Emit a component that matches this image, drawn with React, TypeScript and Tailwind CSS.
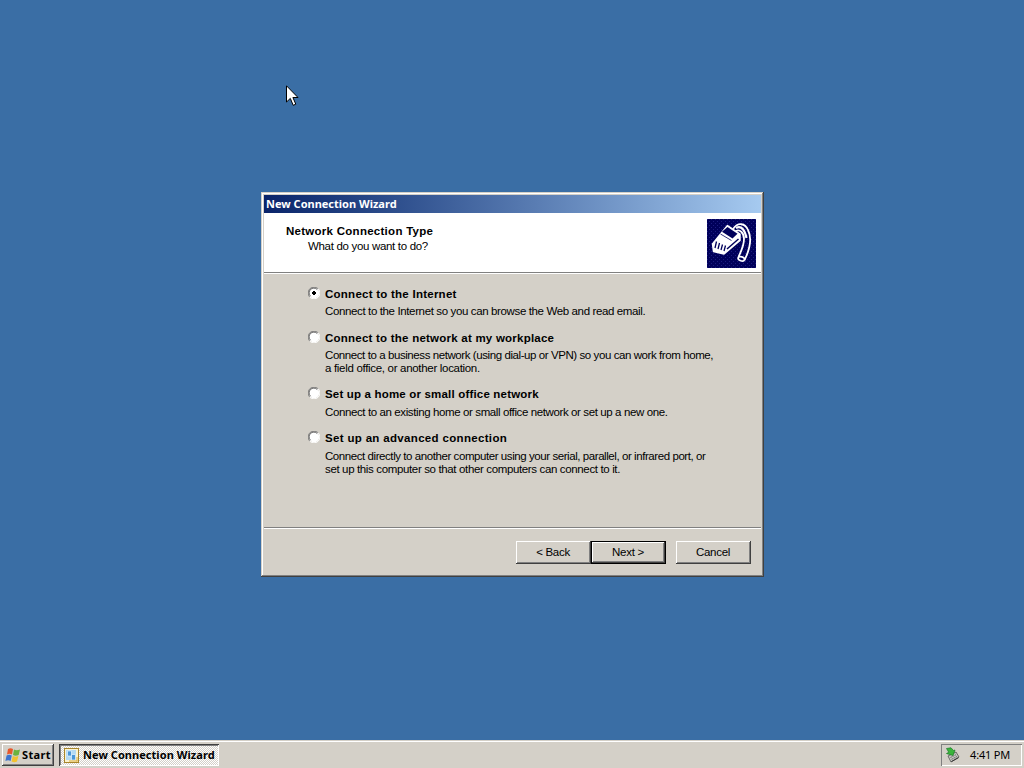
import { useState } from "react";
import clsx from "clsx";

const SANS = "font-['Liberation_Sans',Arial,sans-serif]";
const UI = "font-['Noto_Sans','Open_Sans',sans-serif]";

// Two pixel bevels: outer edge first, inner edge second
const RAISED = "shadow-[inset_-1px_-1px_#404040,inset_1px_1px_#ffffff,inset_-2px_-2px_#808080]";
const WINDOW_FRAME =
  "shadow-[inset_-1px_-1px_#404040,inset_1px_1px_#d4d0c8,inset_-2px_-2px_#808080,inset_2px_2px_#ffffff]";

interface Line {
  text: string;
  tracking: string;
}

interface Option {
  id: string;
  title: Line;
  lines: Line[];
  className: string;
}

const options: Option[] = [
  {
    id: "internet",
    title: { text: "Connect to the Internet", tracking: "tracking-[0.25px]" },
    lines: [{ text: "Connect to the Internet so you can browse the Web and read email.", tracking: "tracking-[-0.37px]" }],
    className: "gap-[4px] h-[44px]",
  },
  {
    id: "workplace",
    title: { text: "Connect to the network at my workplace", tracking: "tracking-[0.23px]" },
    lines: [
      { text: "Connect to a business network (using dial-up or VPN) so you can work from home,", tracking: "tracking-[-0.42px]" },
      { text: "a field office, or another location.", tracking: "tracking-[-0.31px]" },
    ],
    className: "gap-[4px] h-[56px]",
  },
  {
    id: "home",
    title: { text: "Set up a home or small office network", tracking: "tracking-[0.18px]" },
    lines: [{ text: "Connect to an existing home or small office network or set up a new one.", tracking: "tracking-[-0.39px]" }],
    className: "gap-[5px] h-[44px]",
  },
  {
    id: "advanced",
    title: { text: "Set up an advanced connection", tracking: "tracking-[0.33px]" },
    lines: [
      { text: "Connect directly to another computer using your serial, parallel, or infrared port, or", tracking: "tracking-[-0.43px]" },
      { text: "set up this computer so that other computers can connect to it.", tracking: "tracking-[-0.36px]" },
    ],
    className: "gap-[5px]",
  },
];

function Radio({ checked }: { checked: boolean }) {
  return (
    <svg width="12" height="12" viewBox="0 0 12 12" className="shrink-0">
      <circle cx="6" cy="6" r="5.2" fill="#fff" />
      <path d="M1.8 10.2A5.5 5.5 0 0 1 10.2 1.8" fill="none" stroke="#808080" />
      <path d="M2.5 9.2A4.6 4.6 0 0 1 9.2 2.5" fill="none" stroke="#404040" strokeWidth=".8" />
      <path d="M10.2 1.8A5.5 5.5 0 0 1 1.8 10.2" fill="none" stroke="#fff" />
      {checked && <path d="M5 4h2v1h1v2H7v1H5V7H4V5h1z" fill="#000" />}
    </svg>
  );
}

function PlugIcon() {
  return (
    <svg width="49" height="49" viewBox="0 0 49 49" className="bg-[#00005a]">
      <defs>
        <pattern id="dots" width="4" height="4" patternUnits="userSpaceOnUse">
          <rect width="1" height="1" fill="#1c1c80" />
          <rect x="2" y="2" width="1" height="1" fill="#1c1c80" />
        </pattern>
      </defs>
      <rect width="49" height="49" fill="url(#dots)" />
      {/* cable */}
      <path d="M26 10C31 3 38 4 41 11C45 19 43 30 37.5 41" fill="none" stroke="#fff" strokeWidth="1.8" />
      <path d="M29 12C33 10 37 14 37 20C37 27 34 32 31.5 38" fill="none" stroke="#fff" strokeWidth="1.8" />
      <path d="M29 9C35 6 38 12 39.5 19" fill="none" stroke="#fff" strokeWidth="2.2" />
      <ellipse cx="34.3" cy="39.8" rx="3.3" ry="2" transform="rotate(18 34.3 39.8)" fill="#00005a" stroke="#fff" strokeWidth="1.7" />
      {/* connector */}
      <path d="M20.5 6.5L33 15V21.5L17 35L6.500 32.5L5.500 25Z" fill="#fff" stroke="#fff" strokeWidth="1.5" strokeLinejoin="round" />
      <path d="M20.5 8L30.5 14.800L25.500 19.500L15 12.800Z" fill="#00005a" />
      <path d="M13.500 15L24.500 21.5" stroke="#00005a" strokeWidth=".8" />
      <path d="M9.500 22.500L8 29M12.500 24L11 30M15.500 25.500L14 31M18.500 26.500L17 32" stroke="#00005a" strokeWidth="1.3" />
      <path d="M20 30L31.5 20" stroke="#00005a" strokeWidth="1.500" />
    </svg>
  );
}

function StartFlag() {
  return (
    <svg width="16" height="16" viewBox="0 0 16 16" className="shrink-0">
      <path d="M3 2Q5.5 .5 8 2L7 7.5Q4.5 6 2 7.5Z" fill="#e8582c" />
      <path d="M9 2.5Q11.5 4 15 2.5L13.7 8Q10.5 9.5 8 8Z" fill="#6cb33e" />
      <path d="M1.6 8.5Q4.3 7 6.8 8.5L5.6 14Q3.3 12.5 .4 14Z" fill="#3d75cf" />
      <path d="M7.8 9Q10.3 10.5 13.4 9L12 14.5Q9.3 16 6.6 14.5Z" fill="#f3c22e" />
    </svg>
  );
}

function WizardIcon() {
  return (
    <svg width="16" height="16" viewBox="0 0 16 16" className="shrink-0">
      <rect x=".5" y=".5" width="14" height="14" fill="#fbf3cf" stroke="#a8852c" />
      <rect x="2" y="2" width="10" height="10" fill="#b4daf3" />
      <path d="M3.500 3h4v5h-4z" fill="#4b97d8" stroke="#e8f5ff" strokeWidth=".7" />
      <path d="M7.500 6.5h4v5.500h-4z" fill="#4b97d8" stroke="#e8f5ff" strokeWidth=".7" />
      <path d="M5 13h8.500M13 9v4.500" stroke="#dcae3c" />
    </svg>
  );
}

function TrayIcon() {
  return (
    <svg width="16" height="16" viewBox="0 0 16 16" className="-ml-px">
      <path d="M4 9L12 5L15 10L7 15Z" fill="#c4c4c0" stroke="#50504c" strokeWidth=".8" />
      <path d="M6.5 10.5L12 7.7M7.5 12.3L13 9.5" stroke="#666" strokeDasharray="1.5 .8" />
      <path d="M7.5 14.5L14.5 10.7" stroke="#333" />
      <path d="M2.5 1.5L7 .8L9.5 3.5L11 3L9 8.5L2.5 6.5L4.8 5.3Z" fill="#39b53b" stroke="#187a25" strokeWidth=".7" />
    </svg>
  );
}

function WizardButton({ label, isDefault, className }: { label: string; isDefault?: boolean; className?: string }) {
  return (
    <button
      className={clsx(
        "h-[23px] w-[75px] bg-[#d4d0c8] pb-px pr-px text-center text-[11.5px] leading-[22px] tracking-[-0.3px]",
        isDefault
          ? "shadow-[inset_0_0_0_1px_#000,inset_-2px_-2px_#404040,inset_2px_2px_#fff,inset_-3px_-3px_#808080]"
          : RAISED,
        className
      )}
    >
      {label}
    </button>
  );
}

function Cursor() {
  return (
    <svg width="13" height="22" viewBox="0 0 13 22" className="absolute left-[286px] top-[85px]">
      <path d="M.5 .8V17L4.3 13.4L7.2 20.3L9.8 19.2L6.9 12.5H12Z" fill="#fff" stroke="#000" />
    </svg>
  );
}

export default function App() {
  const [selected, setSelected] = useState("internet");

  return (
    <div className={clsx("relative flex h-screen w-screen flex-col overflow-hidden bg-[#3a6ea5] text-black", SANS)}>
      <main className="relative flex-1">
        <Cursor />

        <section className={clsx("absolute left-[261px] top-[192px] flex h-[385px] w-[503px] flex-col bg-[#d4d0c8] p-[3px]", WINDOW_FRAME)}>
          <div className={clsx("h-[18px] shrink-0 bg-linear-to-r from-[#0a246a] to-[#a6caf0] pl-[2px] text-[11px] font-bold leading-[18px] text-white", UI)}>
            New Connection Wizard
          </div>

          <header className="flex h-[60px] shrink-0 justify-between border-b border-b-[#808080] bg-white pl-[22px] pr-[5px] pt-[6px]">
            <div className="pt-[5px]">
              <h1 className="text-[11.5px] font-bold leading-[14px] tracking-[0.27px]">Network Connection Type</h1>
              <p className="pl-[22px] pt-px text-[11.5px] leading-[15px] tracking-[-0.32px]">What do you want to do?</p>
            </div>
            <PlugIcon />
          </header>

          <div className="flex flex-1 flex-col border-t border-white pl-[44px] pt-[13px]">
            {options.map((o) => (
              <div key={o.id} className={clsx("flex flex-col", o.className)} onClick={() => setSelected(o.id)}>
                <div className="flex h-[14px] gap-[5px]">
                  <Radio checked={selected === o.id} />
                  <span className={clsx("whitespace-nowrap text-[11.5px] font-bold leading-[14px]", o.title.tracking)}>
                    {o.title.text}
                  </span>
                </div>
                <div className="pl-[17px] text-[11.5px] leading-[13px]">
                  {o.lines.map((l) => (
                    <p key={l.text} className={clsx("whitespace-nowrap", l.tracking)}>
                      {l.text}
                    </p>
                  ))}
                </div>
              </div>
            ))}
          </div>

          <footer className="flex h-[47px] shrink-0 justify-end border-t border-[#808080] pr-[10px] shadow-[inset_0_1px_#fff]">
            <div className="flex pt-[13px]">
              <WizardButton label="< Back" />
              <WizardButton label="Next >" isDefault />
              <WizardButton label="Cancel" className="ml-[10px]" />
            </div>
          </footer>
        </section>
      </main>

      <footer className={clsx("flex h-[28px] shrink-0 items-start bg-[#d4d0c8] px-[2px] pt-[4px] text-[11px] shadow-[inset_0_1px_#d4d0c8,inset_0_2px_#fff]", UI)}>
        <button className={clsx("flex h-[22px] w-[52px] items-center gap-px pl-[3px] font-bold tracking-[0.35px]", RAISED)}>
          <StartFlag />
          Start
        </button>
        <button className="ml-[5px] flex h-[22px] w-[160px] items-center gap-[3px] bg-[#eae8e4] bg-[repeating-conic-gradient(#ffffff_0_25%,#d4d0c8_0_50%)] bg-[length:2px_2px] pl-[5px] pt-px font-bold tracking-[0.05px] shadow-[inset_1px_1px_#404040,inset_-1px_-1px_#fff,inset_2px_2px_#808080]">
          <WizardIcon />
          New Connection Wizard
        </button>
        <div className="ml-auto flex h-[22px] w-[81px] items-center justify-between pl-[4px] pr-[12px] shadow-[inset_1px_1px_#808080,inset_-1px_-1px_#fff]">
          <TrayIcon />
          <span className="tracking-[-0.2px]">4:41 PM</span>
        </div>
      </footer>
    </div>
  );
}
